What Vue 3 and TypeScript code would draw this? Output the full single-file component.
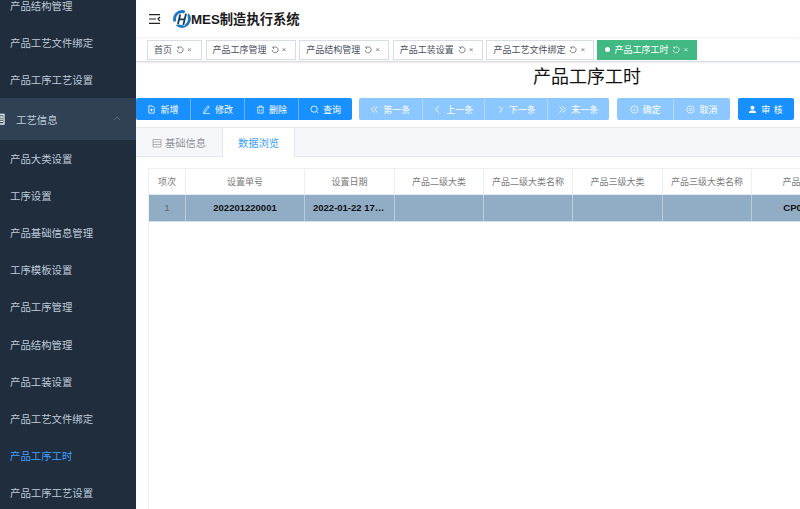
<script setup lang="ts">
const menuTop = ['产品结构管理', '产品工艺文件绑定', '产品工序工艺设置']
const menuSub = ['产品大类设置', '工序设置', '产品基础信息管理', '工序模板设置', '产品工序管理', '产品结构管理', '产品工装设置', '产品工艺文件绑定', '产品工序工时', '产品工序工艺设置']
const tags = [
  { t: '首页', w: 55 }, { t: '产品工序管理', w: 90 }, { t: '产品结构管理', w: 90 },
  { t: '产品工装设置', w: 90 }, { t: '产品工艺文件绑定', w: 107.5 }
]
const cols = [
  { t: '项次', w: 37 }, { t: '设置单号', w: 119 }, { t: '设置日期', w: 90 }, { t: '产品二级大类', w: 89 },
  { t: '产品二级大类名称', w: 89 }, { t: '产品三级大类', w: 90 }, { t: '产品三级大类名称', w: 89 }, { t: '产品编码', w: 98 }
]
const row = ['1', '202201220001', '2022-01-22 17:30:26', '', '', '', '', 'CP0001']
</script>

<template>
  <div class="app">
    <aside class="side">
      <div class="menu">
        <div v-for="m in menuTop" :key="m" class="item">{{ m }}</div>
        <div class="group">
          <svg class="gicon" viewBox="0 0 12 12"><path d="M3 1.500h7v9.500H1.500V4M5 4h4M5 6.200h4M5 8.400h4" fill="none" stroke="#e6e9ee" stroke-width="1.300"/></svg>
          <span class="gtext">工艺信息</span>
          <svg class="chev" viewBox="0 0 10 6"><path d="M1 5l4-4 4 4" fill="none" stroke="#6f7f93" stroke-width="0.900"/></svg>
        </div>
        <div v-for="m in menuSub" :key="m" class="item sub" :class="{ active: m === '产品工序工时' }">{{ m }}</div>
      </div>
    </aside>

    <main class="main">
      <header class="head">
        <svg class="burger" viewBox="0 0 12 10"><path d="M0 .7h11M0 5h7M0 9.300h11M11 3l-2 2 2 2" fill="none" stroke="#222" stroke-width="1.200"/></svg>
        <svg class="logo" viewBox="0 0 20 20">
          <circle cx="10" cy="10" r="8.300" fill="none" stroke="#1d77c4" stroke-width="3.200" stroke-dasharray="19 4"/>
          <path d="M8 4.500L5 16M15 3.500L11.500 17M5.500 10.500h8" fill="none" stroke="#fff" stroke-width="3.600"/>
          <path d="M8 5L5.500 15.500M14.500 4L11.500 16.500M6 10.500h7" fill="none" stroke="#12385f" stroke-width="2"/>
        </svg>
        <span class="brand">MES制造执行系统</span>
      </header>

      <nav class="tags">
        <div v-for="g in tags" :key="g.t" class="tag" :style="{ width: g.w + 'px' }">
          {{ g.t }}
          <svg class="re" viewBox="0 0 10 10"><path d="M3 1.800A3.700 3.700 0 1 1 1.500 5M1.300 1.200L3.400 1.700 3 3.700" fill="none" stroke="#555" stroke-width="0.900"/></svg>
          <span class="x">×</span>
        </div>
        <div class="tag on">
          <i class="dot"></i>产品工序工时
          <svg class="re" viewBox="0 0 10 10"><path d="M3 1.800A3.700 3.700 0 1 1 1.500 5M1.300 1.200L3.400 1.700 3 3.700" fill="none" stroke="#fff" stroke-width="0.900"/></svg>
          <span class="x">×</span>
        </div>
      </nav>

      <section class="page">
        <h1 class="title">产品工序工时</h1>

        <div class="toolbar">
          <div class="bgroup">
            <button class="btn w54">
              <svg viewBox="0 0 10 10"><path d="M2 1h4l2 2v6H2zM3.500 5.500h3M5 4v3" fill="none" stroke="#fff" stroke-width="0.900"/></svg>新增
            </button>
            <button class="btn w54">
              <svg viewBox="0 0 10 10"><path d="M2 7l4.500-6 1.500 1-4.500 6-1.700.4zM1 9.500h8" fill="none" stroke="#fff" stroke-width="0.800"/></svg>修改
            </button>
            <button class="btn w54">
              <svg viewBox="0 0 10 10"><path d="M1 2.500h8M2 2.500V9h6V2.500M3.500 2.500V1h3v1.500M4 5v2M6 5v2" fill="none" stroke="#fff" stroke-width="0.800"/></svg>删除
            </button>
            <button class="btn w54">
              <svg viewBox="0 0 10 10"><circle cx="4.600" cy="4.600" r="3.500" fill="none" stroke="#fff" stroke-width="0.900"/><path d="M7.200 7.200L9 9" stroke="#fff" stroke-width="0.900"/></svg>查询
            </button>
          </div>

          <div class="bgroup g2">
            <button class="btn off w62"><svg viewBox="0 0 10 10"><path d="M5 1.500L1.500 5 5 8.500M8.500 1.500L5 5l3.500 3.500" fill="none" stroke="#fff" stroke-width="0.900"/></svg>第一条</button>
            <button class="btn off w62"><svg viewBox="0 0 10 10"><path d="M6.500 1.500L3 5l3.500 3.500" fill="none" stroke="#fff"/></svg>上一条</button>
            <button class="btn off w62"><svg viewBox="0 0 10 10"><path d="M3.500 1.500L7 5 3.500 8.500" fill="none" stroke="#fff"/></svg>下一条</button>
            <button class="btn off w62"><svg viewBox="0 0 10 10"><path d="M1.500 1.500L5 5 1.500 8.500M5 1.500L8.500 5 5 8.500" fill="none" stroke="#fff" stroke-width="0.900"/></svg>末一条</button>
          </div>

          <div class="bgroup g3">
            <button class="btn off w56">
              <svg viewBox="0 0 10 10"><circle cx="5" cy="5" r="4" fill="none" stroke="#fff" stroke-width="0.800"/><path d="M3 5l1.500 1.500L7 4" fill="none" stroke="#fff" stroke-width="0.800"/></svg>确定
            </button>
            <button class="btn off w56">
              <svg viewBox="0 0 10 10"><circle cx="5" cy="5" r="4" fill="none" stroke="#fff" stroke-width="0.800"/><circle cx="5" cy="5" r="1.400" fill="none" stroke="#fff" stroke-width="0.800"/></svg>取消
            </button>
          </div>

          <div class="bgroup g4">
            <button class="btn w56 audit">
              <svg viewBox="0 0 10 10"><circle cx="5" cy="3" r="2.200" fill="#fff"/><path d="M1 9c0-2.500 1.500-3 4-3s4 .5 4 3z" fill="#fff"/></svg>审 核
            </button>
          </div>
        </div>

        <div class="tabs">
          <div class="tab">
            <svg viewBox="0 0 10 10"><path d="M1 1.500h8v7.500H1zM1 4h8M1 6.500h8" fill="none" stroke="#a6a9ad" stroke-width="0.900"/></svg>基础信息
          </div>
          <div class="tab cur">数据浏览</div>
        </div>

        <div class="grid">
          <div class="tr th">
            <div v-for="c in cols" :key="c.t" class="td" :style="{ width: c.w + 'px' }">{{ c.t }}</div>
          </div>
          <div class="tr rowsel">
            <div v-for="(v, i) in row" :key="i" class="td" :class="{ num: i === 0 }" :style="{ width: cols[i].w + 'px' }"><span class="cell">{{ v }}</span></div>
          </div>
        </div>
      </section>
    </main>
  </div>
</template>

<style>
html, body { margin: 0; padding: 0; overflow: hidden; }
</style>

<style scoped>
.app {
  width: 800px; height: 509px; display: flex; overflow: hidden; background: #fff;
  font-family: "Liberation Sans", "Noto Sans CJK SC", sans-serif;
}
.side { width: 136px; flex: none; background: #1f2d3d; overflow: hidden; }
.menu { margin-top: -12.500px; }
.item {
  height: 37.200px; line-height: 37.200px; padding-left: 10px;
  font-size: 10.400px; color: #bfcbd9; white-space: nowrap;
}
.item.active { color: #409eff; }
.group {
  height: 42px; background: #304156; display: flex; align-items: center;
  position: relative; color: #bfcbd9; font-size: 10.400px; margin-top: -1px; margin-bottom: .5px;
}
.gicon { width: 12px; height: 12px; margin-left: -6px; }
.gtext { margin-left: 10px; }
.chev { width: 8px; height: 5px; position: absolute; left: 113px; top: 18px; }

.main { flex: 1; min-width: 0; display: flex; flex-direction: column; overflow: hidden; }
.head { height: 37px; display: flex; align-items: center; flex: none; box-shadow: 0 1px 3px rgba(0,21,41,.06); }
.burger { width: 12px; height: 10px; margin-left: 13px; }
.logo { width: 18px; height: 18px; margin-left: 12px; }
.brand { font-size: 13.300px; font-weight: 700; color: #1b1b1b; white-space: nowrap; }

.tags {
  height: 25px; box-sizing: border-box; flex: none; display: flex; align-items: center; gap: 3.600px; padding: 0 0 0 11px;
  border-bottom: 1px solid #d8dce5; box-shadow: 0 1px 2px rgba(0,0,0,.08); border-top: 1px solid #f3f4f6;
}
.tag {
  height: 20px; box-sizing: border-box; border: 1px solid #d8dce5; background: #fff; color: #495060;
  font-size: 9px; display: flex; align-items: center; padding-left: 6px; white-space: nowrap; flex: none;
}
.tag.on { width: 100px; background: #42b983; border-color: #42b983; color: #fff; padding-left: 7px; }
.dot { width: 5px; height: 5px; border-radius: 50%; background: #fff; margin-right: 4px; }
.re { width: 8px; height: 8px; margin-left: 4px; }
.x { font-size: 8px; margin-left: 3px; opacity: .75; }

.page { flex: 1; width: 902px; min-height: 0; display: flex; flex-direction: column; }
.title { margin: 0; height: 36px; line-height: 30px; text-align: center; font-size: 18px; font-weight: 400; color: #111; flex: none; }
.toolbar { height: 22px; display: flex; flex: none; }
.bgroup { display: flex; }
.g2 { margin-left: 7px; }
.g3 { margin-left: 8px; }
.g4 { margin-left: 8px; }
.btn {
  height: 22px; box-sizing: border-box; border: 0; border-left: 1px solid rgba(255,255,255,.35); padding: 0;
  background: #1890ff; color: #fff; font: inherit; font-size: 9px; display: flex; align-items: center; justify-content: center;
}
.btn svg { width: 9px; height: 9px; margin-right: 4px; }
.btn:first-child { border-left: 0; border-radius: 2px 0 0 2px; }
.btn:last-child { border-radius: 0 2px 2px 0; }
.btn:only-child { border-radius: 2px; }
.btn.off { background: #8cc8ff; }
.w54 { width: 54px; }
.w62 { width: 62.500px; }
.w56 { width: 56.300px; }
.audit { letter-spacing: .5px; }

.tabs {
  margin-top: 7px; height: 30px; box-sizing: border-box; flex: none; display: flex;
  background: #f5f7fa; border-top: 1px solid #e4e7ed; border-bottom: 1px solid #e4e7ed;
}
.tab {
  width: 86px; height: 29px; box-sizing: border-box; display: flex; align-items: center; justify-content: center;
  font-size: 10.300px; color: #909399; white-space: nowrap;
}
.tab svg { width: 10px; height: 10px; margin-right: 3px; }
.tab.cur { width: 73px; background: #fff; color: #409eff; border: 1px solid #e4e7ed; border-width: 0 1px; height: 29px; }

.grid {
  margin: 11px 0 0 12px; flex: 1; border-left: 1px solid #ebeef5; border-top: 1px solid #ebeef5;
}
.tr { display: flex; }
.td {
  box-sizing: border-box; flex: none; border-right: 1px solid #ebeef5; text-align: center; font-size: 9px;
  overflow: hidden; padding: 0 8px; white-space: nowrap;
}
.th { height: 26px; }
.th .td { line-height: 26px; color: #7a7a7a; border-bottom: 1px solid #e6e9ef; font-weight: 400; padding: 0; }
.rowsel { height: 27px; background: #91acc5; }
.rowsel .td { line-height: 26px; font-size: 9.500px; color: #111; font-weight: 700; border-right: 1px solid #bccddd; border-bottom: 1px solid #d7e0e9; }
.rowsel .num { font-weight: 400; color: #606266; font-size: 9px; }
.cell { display: block; overflow: hidden; text-overflow: ellipsis; }
</style>
